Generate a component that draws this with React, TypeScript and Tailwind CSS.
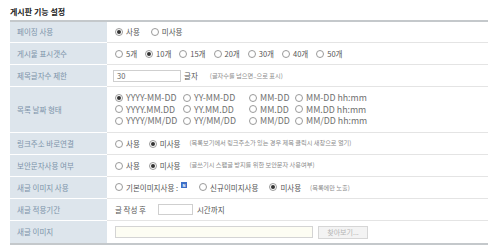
import React from 'react';

interface RadioProps {
  checked?: boolean;
  label: React.ReactNode;
  className?: string;
}

const Radio: React.FC<RadioProps> = ({ checked, label, className }) => (
  <span className={`inline-flex items-center gap-[3px] ${className ?? ''}`}>
    <span className="w-[8px] h-[8px] rounded-full border border-[#9a9a9a] bg-white flex items-center justify-center shrink-0">
      {checked && <span className="w-[4px] h-[4px] rounded-full bg-[#333]" />}
    </span>
    <span>{label}</span>
  </span>
);

const Hint: React.FC<{ children: React.ReactNode }> = ({ children }) => (
  <span className="text-[6.2px] text-[#8a8a8a]">{children}</span>
);

interface RowProps {
  label: string;
  height?: string;
  last?: boolean;
  children: React.ReactNode;
}

const Row: React.FC<RowProps> = ({ label, height = 'h-[22px]', last, children }) => (
  <div className={`flex ${height}`}>
    <div
      className={`w-[97px] shrink-0 bg-[#dde5ec] text-[#7c93a9] pl-[7px] flex items-center ${last ? '' : 'border-b border-white'}`}
    >
      {label}
    </div>
    <div className={`flex-1 pl-[8px] flex items-center text-[#555] ${last ? '' : 'border-b border-[#e4e4e4]'}`}>
      {children}
    </div>
  </div>
);

const dateFormats = [
  ['YYYY-MM-DD', 'YY-MM-DD', 'MM-DD', 'MM-DD hh:mm'],
  ['YYYY.MM.DD', 'YY.MM.DD', 'MM.DD', 'MM.DD hh:mm'],
  ['YYYY/MM/DD', 'YY/MM/DD', 'MM/DD', 'MM/DD hh:mm'],
];

const App: React.FC = () => {
  return (
    <div className="w-[500px] h-[248px] bg-white font-['Noto_Sans_CJK_KR','Liberation_Sans',sans-serif] text-[7.5px] leading-none">
      {/* Title */}
      <div className="h-[20px] pl-[10px] pt-[8px]">
        <h2 className="text-[8px] font-bold text-[#222]">게시판 기능 설정</h2>
      </div>

      {/* Settings table */}
      <div className="ml-[10px] w-[478px] border-t-2 border-b-2 border-[#c4c8cb]">
        <Row label="페이징 사용" height="h-[21px]">
          <div className="flex items-center gap-[11px]">
            <Radio checked label="사용" />
            <Radio label="미사용" />
          </div>
        </Row>

        <Row label="게시물 표시갯수">
          <div className="flex items-center gap-[8px]">
            {[5, 10, 15, 20, 30, 40, 50].map(n => (
              <Radio key={n} checked={n === 10} label={`${n}개`} />
            ))}
          </div>
        </Row>

        <Row label="제목글자수 제한">
          <div className="flex items-center">
            <div className="w-[68px] h-[12px] -ml-[2px] border border-[#cfcfcf] flex items-center pl-[3px] text-[#666]">30</div>
            <span className="ml-[3px]">글자</span>
            <span className="ml-[12px]">
              <Hint>(글자수를 넘으면..으로 표시)</Hint>
            </span>
          </div>
        </Row>

        <Row label="목록 날짜 형태" height="h-[46px]">
          <div className="self-start pt-[5px] text-[8.8px] leading-[11.5px] text-[#707070]">
            {dateFormats.map((line, i) => (
              <div key={i} className="flex">
                {line.map((fmt, j) => (
                  <Radio
                    key={fmt}
                    checked={i === 0 && j === 0}
                    label={fmt}
                    className={j === 0 ? 'w-[68px]' : j === 1 ? 'w-[66px]' : j === 2 ? 'w-[46px]' : ''}
                  />
                ))}
              </div>
            ))}
          </div>
        </Row>

        <Row label="링크주소 바로연결">
          <div className="flex items-center gap-[9px]">
            <Radio label="사용" />
            <Radio checked label="미사용" />
            <Hint>(목록보기에서 링크주소가 있는 경우 제목 클릭시 새창으로 열기)</Hint>
          </div>
        </Row>

        <Row label="보안문자사용 여부">
          <div className="flex items-center gap-[9px]">
            <Radio label="사용" />
            <Radio checked label="미사용" />
            <Hint>(글쓰기시 스팸글 방지를 위한 보안문자 사용여부)</Hint>
          </div>
        </Row>

        <Row label="새글 이미지 사용">
          <div className="flex items-center">
            <Radio
              label={
                <span className="inline-flex items-center">
                  기본이미지사용 :
                  <span className="ml-[3px] -mt-[4px] w-[6px] h-[6px] bg-[#3d6fc8] text-white text-[4px] font-bold flex items-center justify-center">N</span>
                </span>
              }
            />
            <Radio label="신규이미지사용" className="ml-[12px]" />
            <Radio checked label="미사용" className="ml-[11px]" />
            <span className="ml-[9px]">
              <Hint>(목록에만 노출)</Hint>
            </span>
          </div>
        </Row>

        <Row label="새글 적용기간">
          <div className="flex items-center">
            <span>글 작성 후</span>
            <div className="ml-[12px] w-[35px] h-[11px] border border-[#cfcfcf]" />
            <span className="ml-[4px]">시간까지</span>
          </div>
        </Row>

        <Row label="새글 이미지" last>
          <div className="flex items-center">
            <div className="w-[198px] h-[12px] border border-[#d4d4d4] bg-[#fdfdf3]" />
            <button className="ml-[5px] w-[50px] h-[13px] border border-[#d6d6d6] bg-[#f3f3f3] text-[#b5b5b5] text-[7px] flex items-center justify-center">
              찾아보기...
            </button>
          </div>
        </Row>
      </div>
    </div>
  );
};

export default App;
